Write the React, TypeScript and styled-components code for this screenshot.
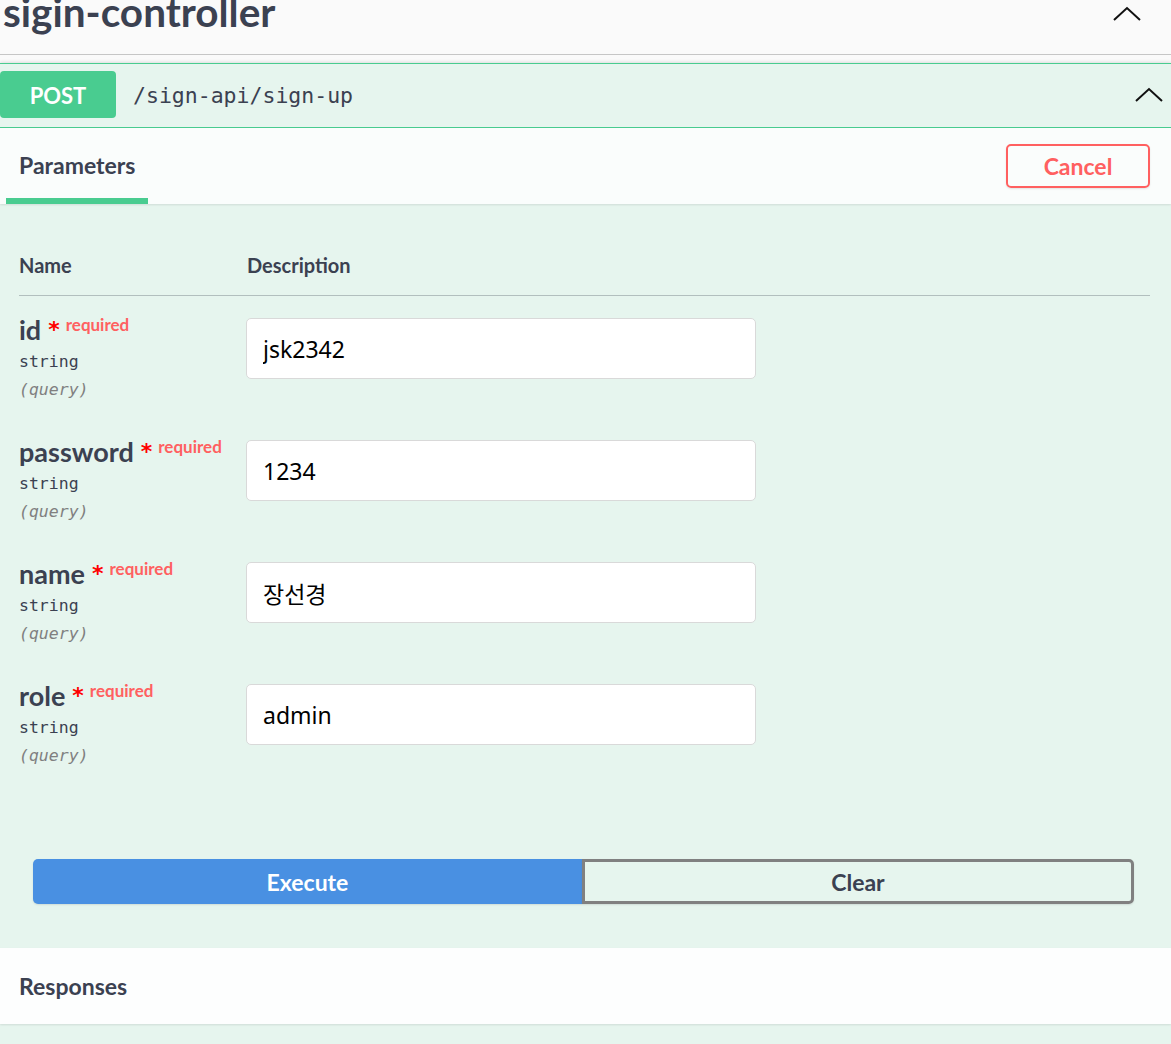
import React from "react";
import styled, { createGlobalStyle } from "styled-components";

const GlobalStyle = createGlobalStyle`
  html, body {
    margin: 0;
    padding: 0;
    background: #fafafa;
    overflow: hidden;
  }
  body {
    font-family: Lato, "Noto Sans", sans-serif;
    color: #3b4151;
  }
  * { box-sizing: border-box; }
`;

const Page = styled.div`
  width: 1171px;
  height: 1044px;
  overflow: hidden;
  display: flex;
  flex-direction: column;
`;

const TagHeader = styled.div`
  height: 55px;
  flex: none;
  display: flex;
  align-items: flex-start;
  justify-content: space-between;
  border-bottom: 1px solid #c6c6c6;
  padding: 0 30px 0 3px;
`;

const TagTitle = styled.h3`
  margin: -13px 0 0;
  font-size: 40.5px;
  line-height: 50px;
  font-weight: 700;
  color: #3b4151;
`;

const ChevronBox = styled.span<{ $top: number }>`
  display: flex;
  margin-top: ${(p) => p.$top}px;
`;

const Chevron = ({ top }: { top: number }) => (
  <ChevronBox $top={top}>
    <svg width="28" height="15" viewBox="0 0 28 15">
      <polyline points="1,14 14,2 27,14" fill="none" stroke="#111" strokeWidth="2" />
    </svg>
  </ChevronBox>
);

const Opblock = styled.div`
  margin-top: 8px;
  flex: 1;
  background: #e6f5ee;
  border-top: 1px solid #49cc90;
  box-shadow: 0 0 4px rgba(0, 0, 0, 0.19);
  display: flex;
  flex-direction: column;
`;

const Summary = styled.div`
  height: 64px;
  display: flex;
  align-items: flex-start;
  border-bottom: 1px solid #49cc90;
  padding: 7px 8px 0 0;
`;

const Method = styled.span`
  width: 116px;
  height: 47px;
  border-radius: 4px;
  background: #49cc90;
  color: #fff;
  font-family: Lato, sans-serif;
  font-weight: 700;
  font-size: 22px;
  padding-top: 2px;
  display: flex;
  align-items: center;
  justify-content: center;
  flex: none;
`;

const Path = styled.span`
  flex: 1;
  font-family: "DejaVu Sans Mono", "Liberation Mono", monospace;
  font-size: 21.5px;
  color: #3b4151;
  padding: 1px 0 0 17px;
  line-height: 47px;
`;

const SectionHeader = styled.div`
  height: 76px;
  background: rgba(255, 255, 255, 0.8);
  box-shadow: 0 1px 2px rgba(0, 0, 0, 0.1);
  display: flex;
  align-items: stretch;
  justify-content: space-between;
  padding: 0 21px 0 6px;
`;

const Tab = styled.div`
  width: 142px;
  display: flex;
  align-items: center;
  padding-left: 13px;
  font-size: 23px;
  font-weight: 700;
  color: #3b4151;
  border-bottom: 6px solid #49cc90;
  margin-top: 3px;
`;

const CancelButton = styled.button`
  align-self: flex-start;
  margin-top: 16px;
  width: 144px;
  height: 44px;
  border: 2px solid #ff6060;
  border-radius: 5px;
  background: transparent;
  color: #ff6060;
  font-family: Lato, sans-serif;
  font-size: 23px;
  font-weight: 700;
  box-shadow: 0 1px 2px rgba(0, 0, 0, 0.1);
`;

const ParamsBody = styled.div`
  padding: 0 21px 0 19px;
`;

const Grid = styled.div`
  display: grid;
  grid-template-columns: 228px 1fr;
`;

const HeadCell = styled.div`
  padding: 49px 0 18px;
  line-height: 24px;
  font-size: 20px;
  font-weight: 700;
  color: #3b4151;
  border-bottom: 1px solid rgba(59, 65, 81, 0.3);
`;

const NameCell = styled.div`
  padding: 22px 0 14px;
  display: flex;
  flex-direction: column;
`;

const ValueCell = styled.div`
  padding: 22px 0 14px;
`;

const ParamName = styled.div`
  height: 30px;
  display: flex;
  align-items: flex-start;
  font-size: 27px;
  font-weight: 700;
  color: #3b4151;
  line-height: 34px;
  margin-top: -5px;
`;

const Star = styled.span`
  color: #f00;
  font-family: "DejaVu Sans", sans-serif;
  font-weight: 700;
  font-size: 22px;
  line-height: 22px;
  margin: 6px 0 0 7px;
`;

const Required = styled.span`
  color: #ff6060;
  font-size: 17px;
  line-height: 20px;
  margin: 2px 0 0 6px;
`;

const ParamType = styled.div`
  font-family: "DejaVu Sans Mono", "Liberation Mono", monospace;
  font-size: 16.5px;
  line-height: 28px;
  color: #3b4151;
  margin-top: 5px;
`;

const ParamIn = styled.div`
  font-family: "DejaVu Sans Mono", "Liberation Mono", monospace;
  font-size: 16.5px;
  line-height: 28px;
  font-style: italic;
  color: #808080;
`;

const Input = styled.input`
  width: 510px;
  height: 61px;
  margin-left: -1px;
  border: 1px solid #d9d9d9;
  border-radius: 5px;
  background: #fff;
  padding: 0 16px;
  font-family: "Noto Sans", "Noto Sans CJK KR", sans-serif;
  font-size: 23px;
  color: #000;
  outline: none;
`;

const ExecuteWrapper = styled.div`
  display: flex;
  padding: 75px 37px 44px 33px;
`;

const ExecuteButton = styled.button`
  flex: 552 1 0;
  height: 45px;
  border: none;
  border-radius: 5px 0 0 5px;
  background: #4990e2;
  color: #fff;
  font-family: Lato, sans-serif;
  font-weight: 700;
  font-size: 23px;
  box-shadow: 0 1px 2px rgba(0, 0, 0, 0.1);
`;

const ClearButton = styled.button`
  flex: 549 1 0;
  height: 45px;
  border: 3px solid #808080;
  border-radius: 0 5px 5px 0;
  background: transparent;
  color: #3b4151;
  font-family: Lato, sans-serif;
  font-weight: 700;
  font-size: 23px;
  box-shadow: 0 1px 2px rgba(0, 0, 0, 0.1);
`;

const ResponsesHeader = styled.div`
  height: 76px;
  background: rgba(255, 255, 255, 0.9);
  box-shadow: 0 1px 2px rgba(0, 0, 0, 0.1);
  display: flex;
  align-items: center;
  padding-left: 19px;
  font-size: 23px;
  font-weight: 700;
  color: #3b4151;
`;

const params = [
  { name: "id", value: "jsk2342" },
  { name: "password", value: "1234" },
  { name: "name", value: "장선경" },
  { name: "role", value: "admin" },
];

export default function App() {
  return (
    <Page>
      <GlobalStyle />
      <TagHeader>
        <TagTitle>sigin-controller</TagTitle>
        <Chevron top={6} />
      </TagHeader>
      <Opblock>
        <Summary>
          <Method>POST</Method>
          <Path>/sign-api/sign-up</Path>
          <Chevron top={16} />
        </Summary>
        <SectionHeader>
          <Tab>Parameters</Tab>
          <CancelButton>Cancel</CancelButton>
        </SectionHeader>
        <ParamsBody>
          <Grid>
            <HeadCell>Name</HeadCell>
            <HeadCell>Description</HeadCell>
            {params.map((p) => (
              <React.Fragment key={p.name}>
                <NameCell>
                  <ParamName>
                    {p.name}
                    <Star>*</Star>
                    <Required>required</Required>
                  </ParamName>
                  <ParamType>string</ParamType>
                  <ParamIn>(query)</ParamIn>
                </NameCell>
                <ValueCell>
                  <Input defaultValue={p.value} />
                </ValueCell>
              </React.Fragment>
            ))}
          </Grid>
        </ParamsBody>
        <ExecuteWrapper>
          <ExecuteButton>Execute</ExecuteButton>
          <ClearButton>Clear</ClearButton>
        </ExecuteWrapper>
        <ResponsesHeader>Responses</ResponsesHeader>
      </Opblock>
    </Page>
  );
}
